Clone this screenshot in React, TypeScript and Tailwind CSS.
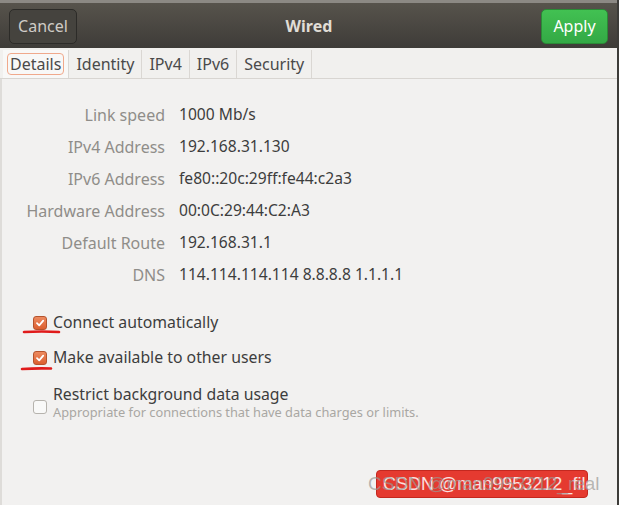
import React from "react";

const rows: [string, string][] = [
  ["Link speed", "1000 Mb/s"],
  ["IPv4 Address", "192.168.31.130"],
  ["IPv6 Address", "fe80::20c:29ff:fe44:c2a3"],
  ["Hardware Address", "00:0C:29:44:C2:A3"],
  ["Default Route", "192.168.31.1"],
  ["DNS", "114.114.114.114 8.8.8.8 1.1.1.1"],
];

const tabs = ["Details", "Identity", "IPv4", "IPv6", "Security"];

function Check({ on }: { on: boolean }) {
  if (!on)
    return <span className="block w-[14px] h-[14px] rounded-[3px] border border-[#b6b3ad] bg-[#f9f9f8] shrink-0" />;
  return (
    <span className="w-[14px] h-[14px] rounded-[3px] border border-[#b5532c] bg-gradient-to-b from-[#ec8a5f] to-[#dc5f2f] flex items-center justify-center shrink-0">
      <svg width="10" height="10" viewBox="0 0 10 10">
        <path d="M2 5.2 L4.2 7.3 L8.2 2.6" stroke="#fff" strokeWidth="1.8" fill="none" strokeLinecap="round" strokeLinejoin="round" />
      </svg>
    </span>
  );
}

export default function App() {
  return (
    <div className="w-[619px] h-[505px] bg-[#4a4946] flex overflow-hidden" style={{ fontFamily: '"Noto Sans", "Open Sans", sans-serif' }}>
      <div className="w-[617px] h-full flex flex-col relative">
        <div className="h-[3px] bg-[#8c8984]" />
        {/* header bar */}
        <div className="h-[45px] bg-gradient-to-b from-[#57534c] to-[#3e3c38] flex items-center justify-between px-[9px] pt-[1px]">
          <button className="w-[68px] h-[35px] rounded-[5px] border border-[#2c2b28] bg-[#45433e] text-[#cfccc6] text-[16px]">
            Cancel
          </button>
          <span className="text-[#e0ddd6] text-[16px] font-bold">Wired</span>
          <button className="w-[67px] h-[35px] rounded-[5px] border border-[#2a8a36] bg-gradient-to-b from-[#42c152] to-[#33a945] text-white text-[16px]">
            Apply
          </button>
        </div>
        {/* tabs */}
        <div className="h-[31px] bg-[#f1f0ee] border-b border-[#d8d5d1] flex items-stretch pl-[3px] pt-[2px]">
          {tabs.map((t, i) => (
            <div
              key={t}
              className={
                i === 0
                  ? "px-[4px] flex items-center bg-[#f8f8f7] border-r border-[#dad7d3]"
                  : "px-[7px] flex items-center border-r border-[#dad7d3] text-[#4a4a4a]"
              }
            >
              {i === 0 ? (
                <span className="px-[2px] h-[22px] flex items-center rounded-[4px] border border-[#f0a98c] text-[#4a4a4a] text-[16px]">
                  {t}
                </span>
              ) : (
                <span className="text-[16px]">{t}</span>
              )}
            </div>
          ))}
        </div>
        {/* content */}
        <div className="flex-1 bg-[#f2f1f0] border-l-2 border-[#dedcd9] relative">
          <div className="pt-[20px] flex flex-col">
            {rows.map(([k, v]) => (
              <div key={k} className="h-[32px] flex items-center">
                <span className="w-[163px] text-right text-[#8f8d89] text-[16px]">{k}</span>
                <span className="ml-[14px] text-[#3d3d3d] text-[15.6px]">{v}</span>
              </div>
            ))}
          </div>
          <div className="mt-[15px] pl-[31px] flex flex-col text-[15.8px] text-[#3d3d3d]">
            <div className="h-[34px] flex items-center gap-[6px]">
              <Check on />
              <span>Connect automatically</span>
            </div>
            <div className="h-[36px] flex items-center gap-[6px]">
              <Check on />
              <span>Make available to other users</span>
            </div>
            <div className="mt-[9px] flex items-start gap-[6px]">
              <span className="block mt-[15px]"><Check on={false} /></span>
              <div className="flex flex-col leading-[18px]">
                <span>Restrict background data usage</span>
                <span className="text-[12.8px] text-[#a9a7a3]">Appropriate for connections that have data charges or limits.</span>
              </div>
            </div>
          </div>
          {/* red annotation marks */}
          <svg className="absolute left-0 top-0 pointer-events-none" width="120" height="320">
            <path d="M22 253 Q40 252 57 253" stroke="#e01b1b" strokeWidth="2.6" fill="none" strokeLinecap="round" />
            <path d="M20 290 Q35 289 49 289.5" stroke="#e01b1b" strokeWidth="2.6" fill="none" strokeLinecap="round" />
          </svg>
          {/* watermark */}
          <div className="absolute left-[374px] top-[391px] w-[212px] h-[28px] rounded-[4px] bg-[#e53a30] border border-[#c4281f]" />
          <span className="absolute left-[381px] top-[393px] text-[18px] text-white/85 leading-[24px] whitespace-nowrap" style={{ fontFamily: '"Liberation Sans", sans-serif' }}>
            CSDN @man9953212_file
          </span>
          <span className="absolute left-[366px] top-[393px] text-[19px] text-[#9a9894]/70 leading-[24px] whitespace-nowrap" style={{ fontFamily: '"Liberation Sans", sans-serif' }}>
            CSDN @man9953212_real
          </span>
        </div>
      </div>
      <div className="flex-1 bg-[#3d3c39]" />
    </div>
  );
}
